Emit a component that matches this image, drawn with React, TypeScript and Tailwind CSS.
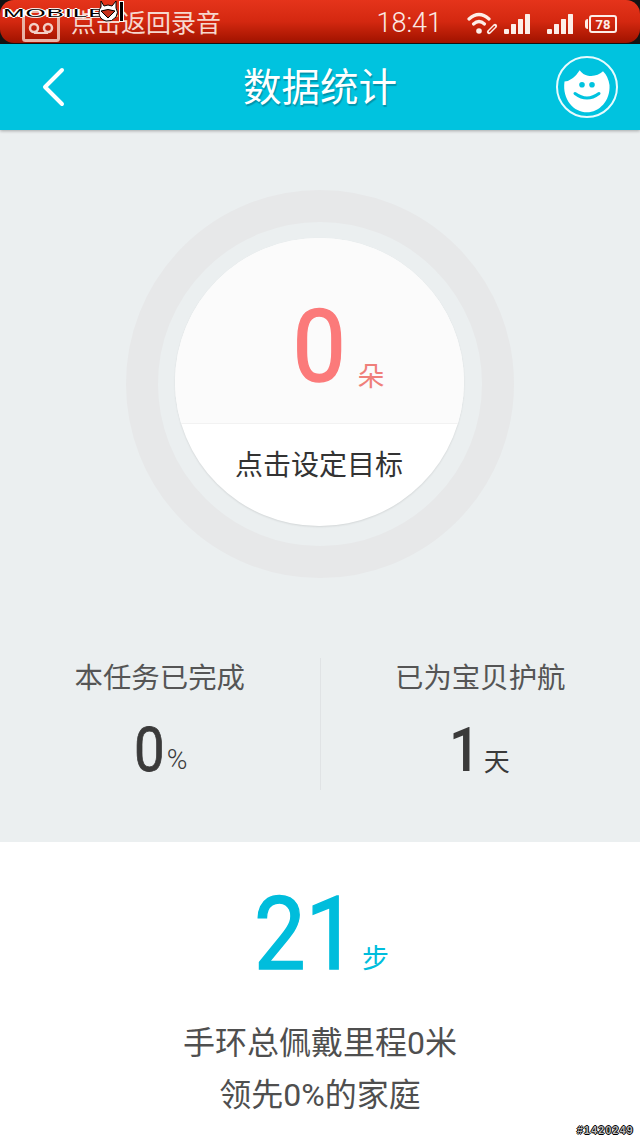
const cjk = "font-['Roboto','Noto_Sans_CJK_SC',sans-serif]";

function Bars() {
  return (
    <svg width="26" height="20" viewBox="0 0 26 20" fill="#fdeee9" className="block">
      <rect x="0" y="15" width="5" height="5" rx="1" />
      <rect x="7" y="10" width="5" height="10" rx="0.5" />
      <rect x="14" y="5" width="5" height="15" rx="0.5" />
      <rect x="21" y="0" width="5" height="20" rx="0.5" />
    </svg>
  );
}

function Smiley() {
  return (
    <svg width="64" height="64" viewBox="0 0 64 64" className="block">
      <circle cx="32" cy="32" r="30" fill="none" stroke="#e8fbfe" strokeWidth="2" />
      <path
        d="M9.5 26.5 Q18 26 24.7 15.3 Q28 20 33 20.7 Q42 22 48 16.3 Q53 21 54.5 30 C55.5 46 44 57.3 32 57.3 C19 57.3 7 45 9.5 26.5 Z"
        fill="#fff"
      />
      <circle cx="27" cy="29.7" r="2.8" fill="#00c3df" />
      <circle cx="37" cy="29.7" r="2.8" fill="#00c3df" />
      <path d="M20 38.5 Q32 47.5 44 38.5" fill="none" stroke="#00c3df" strokeWidth="3" strokeLinecap="round" />
    </svg>
  );
}

export default function App() {
  return (
    <div className={`relative flex h-[1138px] w-[640px] flex-col overflow-hidden bg-white ${cjk}`}>
      <div className="bg-[#141414] pb-[1px]">
        <div className="flex h-[43px] items-center rounded-[14px] bg-gradient-to-b from-[#e5341b] via-[#d42810] to-[#a01200] pl-[22px] pr-[23px] text-[#f6d8cf]">
          <svg width="38" height="32" viewBox="0 0 38 32" className="mr-[11px] mt-[8px] shrink-0">
            <rect x="1.5" y="1.5" width="35" height="29" rx="2" fill="none" stroke="#e9b3a6" strokeWidth="3" />
            <circle cx="12" cy="18" r="4" fill="none" stroke="#f3cfc6" strokeWidth="2.5" />
            <circle cx="26" cy="18" r="4" fill="none" stroke="#f3cfc6" strokeWidth="2.5" />
            <path d="M12 23H26" stroke="#f3cfc6" strokeWidth="2" />
          </svg>
          <span className="mt-[3px] text-[25px] leading-none">点击返回录音</span>
          <span className="ml-auto mr-[25px] mt-[3px] text-[27px] font-light leading-none text-[#fbe9e4]">18:41</span>
          <svg width="32" height="24" viewBox="0 0 32 24" className="mr-[5px] mt-[3px] shrink-0" fill="none" stroke="#fdeee9">
            <path d="M2 8Q12 -1 22 8" strokeWidth="3.2" strokeLinecap="round" />
            <path d="M6.5 13Q12 8 17.5 13" strokeWidth="3.2" strokeLinecap="round" />
            <circle cx="12" cy="20" r="2.8" fill="#fdeee9" stroke="none" />
            <path d="M22 21L28 15" strokeWidth="4.2" strokeLinecap="round" />
            <path d="M22.5 20.5L27.5 15.5" strokeWidth="1.4" stroke="#c9220c" strokeLinecap="round" />
          </svg>
          <span className="mt-[5px]"><Bars /></span>
          <span className="w-[17px]" />
          <span className="mt-[5px]"><Bars /></span>
          <span className="w-[16px]" />
          <span className="relative mt-[5px] flex h-[18px] w-[28px] items-center justify-center rounded-[3px] border-2 border-[#fdeee9] text-[13px] font-bold leading-none text-[#fdeee9]">
            78
            <span className="absolute left-[-6px] top-[2px] h-[10px] w-[3px] rounded-l-sm bg-[#fdeee9]" />
          </span>
        </div>
      </div>

      <header className="z-10 flex h-[86px] items-center bg-[#00c3df] shadow-[0_1px_3px_rgba(0,0,0,0.3)]">
        <div className="flex w-[243px] shrink-0 pl-[40px]">
          <svg width="26" height="40" viewBox="0 0 26 40" fill="none" stroke="#fff" strokeWidth="4" strokeLinecap="round" strokeLinejoin="round">
            <path d="M22 3L5 20L22 37" />
          </svg>
        </div>
        <h1 className="mt-[3px] w-[154px] shrink-0 whitespace-nowrap text-[38.5px] font-normal leading-none text-white [text-shadow:1px_2px_1px_rgba(0,90,110,0.45)]">数据统计</h1>
        <div className="flex w-[243px] shrink-0 justify-end pr-[21px]">
          <Smiley />
        </div>
      </header>

      <main className="flex h-[712px] flex-col items-center bg-[#ebeff0] pt-[60px]">
        <div className="flex h-[388px] w-[388px] items-center justify-center rounded-full border-[32px] border-[#e7e8e9]">
          <div className="mr-[2px] mt-[-4px] flex h-[288px] w-[289px] flex-col overflow-hidden rounded-full bg-white shadow-[0_1px_2px_rgba(0,0,0,0.1)]">
            <div className="flex h-[186px] items-end justify-center border-b border-[#f2f2f2] bg-[#fbfbfb] pb-[34px] pl-[38px]">
              <span className="inline-block scale-x-[0.95] text-[100px] leading-[84px] text-[#fb7a7a] [-webkit-text-stroke:1.5px_#fb7a7a]">0</span>
              <span className="mb-[-2px] ml-[10px] text-[27px] leading-none text-[#ef7f7a]">朵</span>
            </div>
            <div className="flex flex-1 justify-center pt-[28px] text-[28px] leading-none text-[#333]">点击设定目标</div>
          </div>
        </div>

        <div className="mt-[80px] flex h-[132px] w-full">
          <div className="flex flex-1 flex-col items-center border-r border-[#e0e3e5] pt-[7px]">
            <span className="text-[28.4px] leading-[28px] text-[#555]">本任务已完成</span>
            <div className="mt-[28px] flex items-end">
              <span className="inline-block scale-x-[0.88] text-[62px] leading-[58px] text-[#3a3a3a] [-webkit-text-stroke:0.8px_#3a3a3a]">0</span>
              <span className="mb-[5px] text-[28px] font-light leading-none text-[#3a3a3a]">%</span>
            </div>
          </div>
          <div className="flex flex-1 flex-col items-center pt-[7px]">
            <span className="text-[28.4px] leading-[28px] text-[#555]">已为宝贝护航</span>
            <div className="mt-[28px] flex items-end pr-[4px]">
              <span className="inline-block scale-x-[0.88] text-[62px] font-medium leading-[58px] text-[#3a3a3a]">1</span>
              <span className="mb-[4px] ml-[2px] text-[26px] leading-none text-[#3a3a3a]">天</span>
            </div>
          </div>
        </div>
      </main>

      <section className="flex flex-1 flex-col items-center bg-white pt-[50px]">
        <div className="flex items-end pl-[3px]">
          <span className="inline-block w-[108px] origin-left scale-x-[0.9] text-[102px] leading-[84px] text-[#00bddc] [-webkit-text-stroke:1.5px_#00bddc]">21</span>
          <span className="mb-[3px] text-[27px] leading-none text-[#00bddc]">步</span>
        </div>
        <p className="mt-[41px] text-[32px] leading-[52px] text-[#4f4f4f]">手环总佩戴里程0米</p>
        <p className="text-[32px] leading-[52px] text-[#4f4f4f]">领先0%的家庭</p>
      </section>

      <span className="absolute left-[3px] top-[8px] origin-left scale-x-[2.35] font-['Liberation_Sans',sans-serif] text-[11px] font-normal leading-[10px] tracking-[0.4px] text-black [text-shadow:1px_0_0_#fff,-1px_0_0_#fff,0_1px_0_#fff,0_-1px_0_#fff]">MOBILE</span>
      <svg width="28" height="24" viewBox="0 0 28 24" className="absolute left-[98px] top-[0px]">
        <path d="M3 1L6 6Q10 4 14 6L18 1L18 8Q21 12 18 17Q14 22 8 21Q1 19 1 13Q1 9 3 7Z" fill="#fff" stroke="#000" strokeWidth="1" />
        <path d="M3 11Q10 8 17 11L10 18Z" fill="#c5311c" stroke="#000" />
        <rect x="21.5" y="1.5" width="4" height="20" fill="#000" stroke="#fff" />
      </svg>
      <span className="absolute right-[6px] top-[1125px] font-['Liberation_Sans',sans-serif] text-[10.5px] font-bold leading-none tracking-[1.3px] text-[#bbb] [text-shadow:1px_0_0_#000,-1px_0_0_#000,0_1px_0_#000,0_-1px_0_#000]">#1420249</span>
    </div>
  );
}
